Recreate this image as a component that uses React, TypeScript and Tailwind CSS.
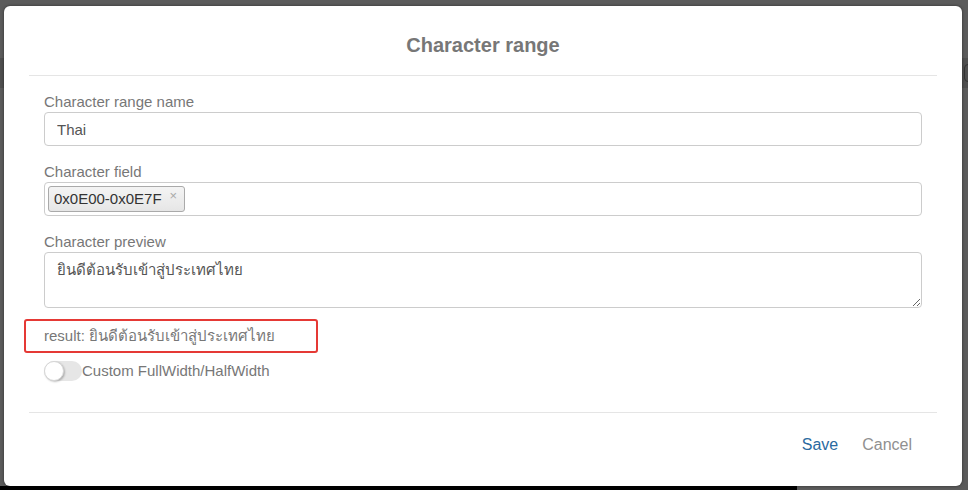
import React, { useState } from 'react';

const font = { fontFamily: '"Liberation Sans", Arial, "Noto Sans", sans-serif' };

function Field({ label, children }: { label: string; children: React.ReactNode }) {
  return (
    <div className="flex flex-col">
      <label className="text-[15px] leading-[21px] text-[#777]">{label}</label>
      {children}
    </div>
  );
}

function Toggle({ on, onChange }: { on: boolean; onChange: (v: boolean) => void }) {
  return (
    <button
      type="button"
      onClick={() => onChange(!on)}
      className={`relative w-[38px] h-[20px] rounded-full shrink-0 ${on ? 'bg-[#5cb85c]' : 'bg-[#e6e6e6]'}`}
    >
      <span
        className={`absolute top-0 h-[20px] w-[20px] rounded-full bg-white border border-[#d6d6d6] shadow-[1px_1px_2px_rgba(0,0,0,0.25)] ${on ? 'left-[18px]' : 'left-0'}`}
      />
    </button>
  );
}

export default function App() {
  const [name, setName] = useState('Thai');
  const [preview, setPreview] = useState('ยินดีต้อนรับเข้าสู่ประเทศไทย');
  const [custom, setCustom] = useState(false);

  return (
    <div className="relative w-[968px] h-[490px] overflow-hidden bg-[#5b5b5b]" style={font}>
      {/* page behind the overlay */}
      <div className="flex flex-col h-full">
        <div className="h-[58px]" />
        <div className="h-[30px] bg-[#4f4f4f] flex justify-end items-center">
          <div className="w-[10px] h-[18px] mr-[-6px] rounded-[4px] border border-[#333]" />
        </div>
        <div className="flex-1" />
        <div className="h-[4px] flex">
          <div className="w-[797px] bg-black" />
        </div>
      </div>

      {/* modal */}
      <div className="absolute left-[4px] top-[6px] w-[958px] h-[480px] bg-white rounded-[6px] shadow-[0_0_3px_rgba(0,0,0,0.5)] flex flex-col">
        <div className="h-[69px] pt-[8px] flex items-center justify-center">
          <h3 className="text-[20px] font-bold text-[#777]">Character range</h3>
        </div>
        <div className="mx-[25px] border-t border-[#e5e5e5]" />

        <div className="px-[40px] pt-[15px] flex flex-col">
          <Field label="Character range name">
            <input
              value={name}
              onChange={(e) => setName(e.target.value)}
              className="h-[34px] border border-[#ccc] rounded-[4px] px-3 text-[15px] text-[#555] outline-none"
            />
          </Field>

          <div className="mt-[15px]">
            <Field label="Character field">
              <div className="h-[34px] border border-[#ccc] rounded-[4px] flex items-center pl-[3px]">
                <span className="h-[26px] flex items-center gap-[8px] pl-[5px] pr-[7px] rounded-[3px] border border-[#aaa] bg-gradient-to-b from-[#f4f4f4] to-[#e6e6e6] text-[15px] text-[#333]">
                  0x0E00-0x0E7F
                  <span className="text-[13px] text-[#aaa] -mt-[6px]">×</span>
                </span>
              </div>
            </Field>
          </div>

          <div className="mt-[15px]">
            <Field label="Character preview">
              <textarea
                value={preview}
                onChange={(e) => setPreview(e.target.value)}
                className="h-[56px] border border-[#ccc] rounded-[4px] px-3 pt-[6px] text-[15px] text-[#555] outline-none"
              />
            </Field>
          </div>

          <div className="mt-[11px] -ml-[20px] w-[294px] h-[34px] border-2 border-[#e53935] rounded-[3px] flex items-center pl-[18px] text-[15px] text-[#777]">
            result: {preview}
          </div>

          <div className="mt-[8px] flex items-center h-[20px]">
            <Toggle on={custom} onChange={setCustom} />
            <span className="text-[15px] text-[#777]">Custom FullWidth/HalfWidth</span>
          </div>
        </div>

        <div className="mx-[25px] mt-[31px] border-t border-[#e5e5e5]" />

        <div className="flex justify-end items-center gap-6 pr-[50px] pt-[20px]">
          <button className="text-[16px] text-[#2a6aa0]">Save</button>
          <button className="text-[16px] text-[#909090]">Cancel</button>
        </div>
      </div>
    </div>
  );
}
